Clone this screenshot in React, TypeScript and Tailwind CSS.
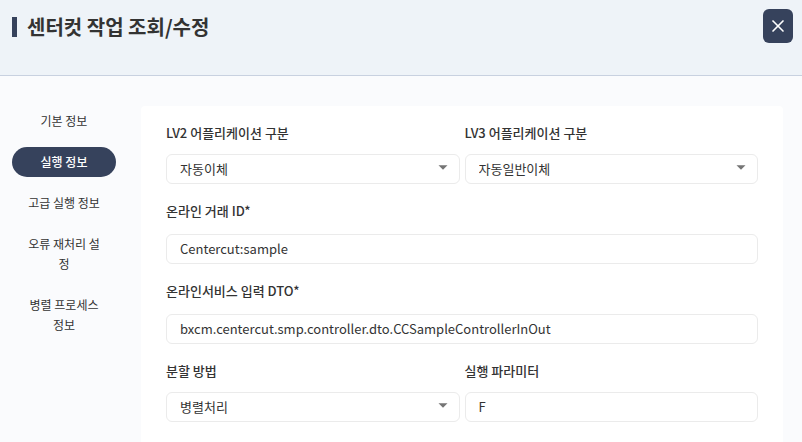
import React from 'react';
import { X } from 'lucide-react';

const tabs = ['기본 정보', '실행 정보', '고급 실행 정보', '오류 재처리 설정', '병렬 프로세스 정보'];

const controlClass =
  'block w-full h-[30px] rounded-md border border-[#ebebeb] bg-white px-[13px] text-[13px] leading-5 text-[#333333] outline-none focus:border-[#36425c]';

const labelClass = 'text-[13px] leading-5 font-medium text-[#333333]';

function SelectField({ id, label, options }: { id: string; label: string; options: string[] }) {
  return (
    <div className="flex flex-col gap-[11px]">
      <label htmlFor={id} className={labelClass}>{label}</label>
      <div className="relative">
        <select id={id} className={`${controlClass} appearance-none`}>
          {options.map(option => (
            <option key={option}>{option}</option>
          ))}
        </select>
        <svg viewBox="0 0 10 5" className="pointer-events-none absolute right-3 top-[11px] w-[10px] h-[5px]" aria-hidden="true">
          <path d="M0.5 0.2h9L5 4.8z" fill="#757575" />
        </svg>
      </div>
    </div>
  );
}

function TextField({ id, label, value, wide }: { id: string; label: string; value: string; wide?: boolean }) {
  return (
    <div className={wide ? 'col-span-2 flex flex-col gap-[13px]' : 'flex flex-col gap-[11px]'}>
      <label htmlFor={id} className={labelClass}>{label}</label>
      <input id={id} type="text" defaultValue={value} className={`${controlClass} pb-[2px]`} />
    </div>
  );
}

export default function App() {
  const [activeTab, setActiveTab] = React.useState('실행 정보');

  return (
    <div className="flex min-h-screen flex-col bg-[#fafbfd] font-['Noto_Sans_CJK_KR','Noto_Sans',sans-serif] text-[#333333]">
      {/* Header */}
      <header className="flex h-[76px] items-start justify-between border-b border-[#c8d1e0] bg-[#eef3f8] pt-[9px] pr-[9px] pl-3">
        <div className="flex items-center gap-[10px] pt-1">
          <span className="h-5 w-[5px] bg-[#36425c]" />
          <h1 className="text-[20px] leading-7 font-bold">센터컷 작업 조회/수정</h1>
        </div>
        <button type="button" aria-label="닫기" className="flex h-[34px] w-[30px] items-center justify-center rounded-md bg-[#36425c] text-white">
          <X className="h-5 w-5" strokeWidth={2} />
        </button>
      </header>

      <div className="flex flex-1 items-stretch gap-[25px] pt-[30px] pr-[19px] pl-3">
        {/* Side tabs */}
        <nav className="flex w-[104px] shrink-0 flex-col gap-[11px]">
          {tabs.map(tab => (
            <button
              key={tab}
              type="button"
              onClick={() => setActiveTab(tab)}
              className={`rounded-full px-[15px] py-[5px] text-center text-[12px] leading-5 ${tab === activeTab ? 'bg-[#36425c] font-medium text-white' : 'text-[#333333]'}`}
            >
              {tab}
            </button>
          ))}
        </nav>

        {/* Form */}
        <main className="min-w-0 flex-1 rounded-t bg-white px-[25px] pt-[17px] pb-5">
          <form className="grid grid-cols-2 gap-x-[5px] gap-y-[17px]">
            <SelectField id="lv2" label="LV2 어플리케이션 구분" options={['자동이체']} />
            <SelectField id="lv3" label="LV3 어플리케이션 구분" options={['자동일반이체']} />
            <TextField id="trxId" label="온라인 거래 ID*" value="Centercut:sample" wide />
            <TextField id="inputDto" label="온라인서비스 입력 DTO*" value="bxcm.centercut.smp.controller.dto.CCSampleControllerInOut" wide />
            <SelectField id="splitMethod" label="분할 방법" options={['병렬처리']} />
            <TextField id="param" label="실행 파라미터" value="F" />
          </form>
        </main>
      </div>
    </div>
  );
}
